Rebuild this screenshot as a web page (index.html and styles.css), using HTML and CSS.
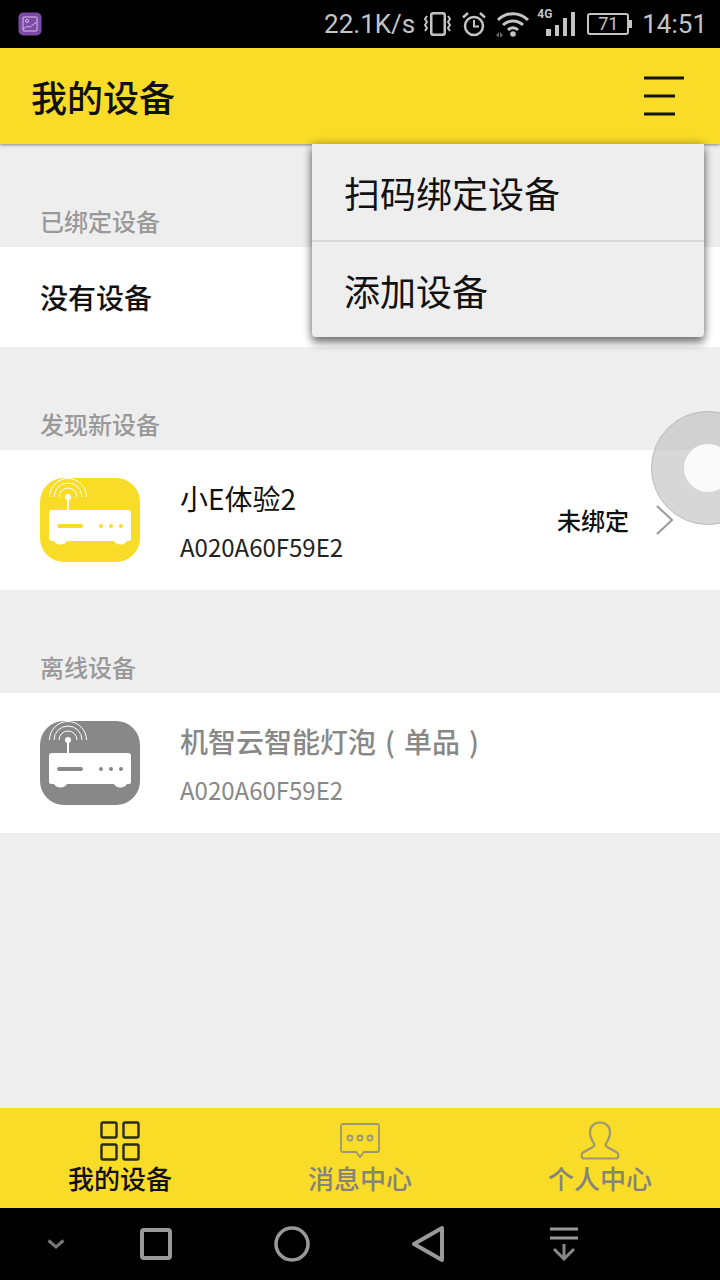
FILE: index.html
```html
<!DOCTYPE html>
<html lang="zh-CN">
<head>
<meta charset="utf-8">
<title>我的设备</title>
<link rel="stylesheet" href="styles.css">
</head>
<body>
<svg class="defs" width="0" height="0" aria-hidden="true">
  <symbol id="router" viewBox="0 0 100 84">
    <rect class="r-bg" width="100" height="84" rx="24"/>
    <path class="r-fg" fill-rule="evenodd" d="M12 32h76a3 3 0 0 1 3 3v26a2 2 0 0 1-2 2H87a7 5.500 0 0 1-13 0H27a7 5.500 0 0 1-13 0H11a2 2 0 0 1-2-2V35a3 3 0 0 1 3-3zM19 46a2 2 0 0 0 0 4h22a2 2 0 0 0 0-4zM61 46a2 2 0 1 0 0 4a2 2 0 0 0 0-4zM71 46a2 2 0 1 0 0 4a2 2 0 0 0 0-4zM81 46a2 2 0 1 0 0 4a2 2 0 0 0 0-4z"/>
    <rect class="r-fg" x="27" y="20" width="2" height="13"/>
    <circle class="r-fg" cx="28" cy="19" r="3"/>
    <g class="r-arc">
      <path d="M19 19a9 9 0 0 1 18 0"/>
      <path d="M14 19a14 14 0 0 1 28 0"/>
      <path d="M9.500 19a18.500 18.500 0 0 1 37 0"/>
    </g>
  </symbol>
</svg>
<div class="screen">
  <header class="status">
    <svg class="app-ic" viewBox="0 0 24 24"><rect width="23" height="23" x=".5" y=".5" rx="5" fill="#7d4aa8"/><rect x="5" y="5" width="14" height="14" rx="1" fill="none" stroke="#d5c3e3" stroke-width="1"/><circle cx="9" cy="9" r="1.500" fill="none" stroke="#d5c3e3"/><path d="M5.500 17c3-4 6-1 8-3l5-4" fill="none" stroke="#d5c3e3"/></svg>
    <div class="status-right">
      <span class="speed">22.1K/s</span>
      <svg class="s-vib" viewBox="0 0 27 24"><rect x="7.250" y="1.250" width="13.500" height="21.500" rx="2" fill="none" stroke="#c4c4c4" stroke-width="2.500"/><path d="M3 4L1 7l2 3-2 3 2 3-2 3M24 4l2 3-2 3 2 3-2 3 2 3" fill="none" stroke="#c4c4c4" stroke-width="2"/></svg>
      <svg class="s-alarm" viewBox="0 0 24 26"><circle cx="12" cy="15" r="9" fill="none" stroke="#c4c4c4" stroke-width="2.500"/><path d="M12 9v6.500h5" fill="none" stroke="#c4c4c4" stroke-width="2"/><path d="M1 6.500L6 2M23 6.500L18 2" stroke="#c4c4c4" stroke-width="2.500"/></svg>
      <svg class="s-wifi" viewBox="0 0 34 26"><path d="M2 9c8.500-8.500 21.500-8.500 30 0M7 14c5.500-5.500 14.500-5.500 20 0M12 19c3-3 7-3 10 0" fill="none" stroke="#c4c4c4" stroke-width="3"/><circle cx="17" cy="23" r="2.800" fill="#c4c4c4"/><path d="M0 24l3-3v6zM4 21l3 3-3 3z" fill="#666"/></svg>
      <span class="s-signal">
        <i class="s-4g">4G</i>
        <svg viewBox="0 0 30 24"><path d="M0 17h5v7H0zM9 13h4v11H9zM17 6h4v18h-4zM25 0h4v24h-4z" fill="#c4c4c4"/></svg>
      </span>
      <span class="battery"><b>71</b></span>
      <span class="clock">14:51</span>
    </div>
  </header>

  <div class="appbar">
    <h1>我的设备</h1>
    <svg class="menu-ic" viewBox="0 0 40 40"><path d="M0 2h40M0 20h31M0 38h31" stroke="#151510" stroke-width="3"/></svg>
  </div>

  <main class="content">
    <section>
      <h2>已绑定设备</h2>
      <div class="row row-empty">没有设备</div>
    </section>
    <section>
      <h2>发现新设备</h2>
      <div class="row device">
        <svg class="router yellow"><use href="#router"/></svg>
        <div class="info">
          <div class="name">小E体验2</div>
          <div class="mac">A020A60F59E2</div>
        </div>
        <span class="state">未绑定</span>
        <svg class="chev" viewBox="0 0 18 30"><path d="M1 1l15 14L1 29" fill="none" stroke="#999" stroke-width="2"/></svg>
      </div>
    </section>
    <section>
      <h2>离线设备</h2>
      <div class="row device offline">
        <svg class="router gray"><use href="#router"/></svg>
        <div class="info">
          <div class="name">机智云智能灯泡<span class="paren">(</span>单品<span class="paren">)</span></div>
          <div class="mac">A020A60F59E2</div>
        </div>
      </div>
    </section>
  </main>

  <nav class="tabs">
    <div class="tab active">
      <svg viewBox="0 0 40 40"><g fill="none" stroke="#2a2a20" stroke-width="2.400"><rect x="1.500" y="1.500" width="15" height="15" rx="1.500"/><rect x="23.500" y="1.500" width="15" height="15" rx="1.500"/><rect x="1.500" y="23.500" width="15" height="15" rx="1.500"/><rect x="23.500" y="23.500" width="15" height="15" rx="1.500"/></g></svg>
      <span>我的设备</span>
    </div>
    <div class="tab">
      <svg viewBox="0 0 40 40"><path d="M3 3h34a2 2 0 0 1 2 2v24a2 2 0 0 1-2 2H24l-4 5-4-5H3a2 2 0 0 1-2-2V5a2 2 0 0 1 2-2z" fill="none" stroke="#9a9678" stroke-width="1.800"/><g fill="none" stroke="#9a9678" stroke-width="1.800"><circle cx="10" cy="17" r="2.500"/><circle cx="20" cy="17" r="2.500"/><circle cx="30" cy="17" r="2.500"/></g></svg>
      <span>消息中心</span>
    </div>
    <div class="tab">
      <svg viewBox="0 0 40 40"><path d="M20 1.500c6 0 10 4 10 10 0 5-2 8-4 11-1 2 0 3 2 4l9 5c2 1 2 6-1 6H4c-3 0-3-5-1-6l9-5c2-1 3-2 2-4-2-3-4-6-4-11 0-6 4-10 10-10z" fill="none" stroke="#9a9678" stroke-width="2.200"/></svg>
      <span>个人中心</span>
    </div>
  </nav>

  <footer class="sysnav">
    <svg class="n-down" viewBox="0 0 18 10"><path d="M1.500 1.500L9 8l7.500-6.500" fill="none" stroke="#777" stroke-width="3"/></svg>
    <svg class="n-square" viewBox="0 0 32 32"><rect x="2" y="2" width="28" height="28" rx="2" fill="none" stroke="#999" stroke-width="4"/></svg>
    <svg class="n-circle" viewBox="0 0 36 36"><circle cx="18" cy="18" r="16" fill="none" stroke="#999" stroke-width="3.500"/></svg>
    <svg class="n-back" viewBox="0 0 34 38"><path d="M31 3v32L3 19z" fill="none" stroke="#999" stroke-width="4" stroke-linejoin="round"/></svg>
    <svg class="n-drop" viewBox="0 0 28 34"><path d="M0 2h28M0 11h28" stroke="#999" stroke-width="3"/><path d="M14 17v15M4 22l10 10 10-10" fill="none" stroke="#888" stroke-width="3"/></svg>
  </footer>

  <div class="popup">
    <div class="popup-item">扫码绑定设备</div>
    <div class="popup-item">添加设备</div>
  </div>
  <div class="ball"><span></span></div>
</div>
</body>
</html>
```

FILE: styles.css
```css
* { box-sizing: border-box; }
html, body { margin: 0; padding: 0; }
body {
  font-family: "Noto Sans CJK SC", "Noto Sans", sans-serif;
  font-weight: 500;
  background: #eee;
}
.defs { position: absolute; }
.screen {
  position: relative;
  width: 720px;
  height: 1280px;
  overflow: hidden;
  display: flex;
  flex-direction: column;
  background: #eee;
}

/* status bar */
.status {
  height: 48px;
  flex: none;
  background: #000;
  display: flex;
  align-items: center;
  justify-content: space-between;
  padding: 0 13px 0 18px;
  color: #c4c4c4;
}
.app-ic { width: 24px; height: 24px; }
.status-right { display: flex; align-items: center; }
.speed, .clock {
  font-family: Roboto, sans-serif;
  font-weight: 400;
  font-size: 26px;
  line-height: 48px;
}
.s-vib { width: 27px; height: 24px; margin-left: 9px; }
.s-alarm { width: 24px; height: 26px; margin-left: 11px; }
.s-wifi { width: 34px; height: 26px; margin-left: 10px; }
.s-signal { position: relative; width: 30px; height: 24px; margin-left: 16px; display: flex; }
.s-signal svg { width: 30px; height: 24px; }
.s-4g {
  position: absolute;
  left: -9px;
  top: -5px;
  font: normal 700 12px/14px Roboto, sans-serif;
}
.battery {
  margin-left: 11px;
  width: 42px;
  height: 22px;
  border: 2px solid #c4c4c4;
  border-radius: 3px;
  display: flex;
  align-items: center;
  justify-content: center;
  position: relative;
}
.battery::after {
  content: "";
  position: absolute;
  right: -5px;
  top: 5px;
  width: 3px;
  height: 8px;
  background: #c4c4c4;
}
.battery b { font: 400 18px/18px Roboto, sans-serif; }
.clock { margin-left: 13px; }

/* app bar */
.appbar {
  position: relative;
  z-index: 2;
  height: 96px;
  flex: none;
  background: #f9dc27;
  display: flex;
  align-items: center;
  justify-content: space-between;
  padding: 0 36px 0 31px;
  box-shadow: 0 1px 3px rgba(0, 0, 0, .45);
}
.appbar h1 {
  margin: 0;
  font-size: 36px;
  line-height: 48px;
  font-weight: 500;
  color: #111;
}
.menu-ic { width: 40px; height: 40px; }

/* content */
.content { flex: 1; }
section h2 {
  margin: 0;
  height: 103px;
  display: flex;
  align-items: flex-end;
  padding: 0 0 8px 40px;
  font-size: 24px;
  line-height: 36px;
  font-weight: 500;
  color: #999;
}
.row { background: #fff; display: flex; align-items: center; }
.row-empty {
  height: 100px;
  padding: 0 40px;
  font-size: 28px;
  color: #111;
}
.device { height: 140px; padding: 0 46px 0 40px; }
.router { width: 100px; height: 84px; flex: none; }
.yellow { --router-bg: #f9dc27; }
.gray { --router-bg: #888; }
.r-bg { fill: var(--router-bg); }
.r-fg { fill: #fff; }
.r-arc { fill: none; stroke: #fff; stroke-width: 1; }
.info { flex: 1; margin-left: 40px; padding-top: 2px; }
.name { font-size: 28px; line-height: 40px; color: #111; font-weight: 400; }
.mac { font-size: 24px; line-height: 34px; margin-top: 12px; color: #222; font-weight: 400; }
.offline .name { color: #888; font-weight: 500; }
.offline .mac { color: #888; }
.paren { display: inline-block; width: 28px; text-align: center; }
.state { font-size: 24px; color: #111; margin-top: -2px; margin-left: -1px; }
.chev { width: 18px; height: 30px; margin-left: 27px; }

/* bottom tabs */
.tabs {
  height: 100px;
  flex: none;
  background: #f9dc27;
  display: flex;
}
.tab {
  flex: 1;
  display: flex;
  flex-direction: column;
  align-items: center;
  padding-top: 13px;
  color: #85837a;
}
.tab svg { width: 40px; height: 40px; flex: none; }
.tab span { font-size: 26px; line-height: 38px; margin-top: -2px; }
.tab.active { color: #111; }

/* system navigation */
.sysnav {
  height: 72px;
  flex: none;
  background: #000;
  position: relative;
  display: grid;
  grid-template-columns: 47px 18px 75px 32px 102px 36px 102px 34px 104px 28px 1fr;
  align-items: center;
}
.n-down { grid-column: 2; width: 18px; height: 10px; }
.n-square { grid-column: 4; width: 32px; height: 32px; }
.n-circle { grid-column: 6; width: 36px; height: 36px; }
.n-back { grid-column: 8; width: 34px; height: 38px; margin-left: -1px; }
.n-drop { grid-column: 10; width: 28px; height: 34px; }

/* overlays */
.popup {
  position: absolute;
  z-index: 3;
  left: 312px;
  top: 144px;
  width: 392px;
  height: 193px;
  background: #eee;
  border-radius: 0 0 4px 4px;
  box-shadow: 0 6px 8px rgba(0, 0, 0, .45), 0 0 10px rgba(0, 0, 0, .3);
}
.popup-item {
  height: 96px;
  padding-left: 32px;
  display: flex;
  align-items: center;
  font-size: 36px;
  font-weight: 400;
  color: #111;
}
.popup-item + .popup-item { height: 97px; border-top: 2px solid #d8d8d8; }
.ball {
  position: absolute;
  z-index: 3;
  left: 651px;
  top: 411px;
  width: 114px;
  height: 114px;
  border-radius: 50%;
  background: rgba(190, 190, 190, .62);
  border: 1px solid #bbb;
  display: flex;
  align-items: center;
  justify-content: center;
}
.ball span {
  width: 48px;
  height: 48px;
  border-radius: 50%;
  background: #fafafa;
}
```
